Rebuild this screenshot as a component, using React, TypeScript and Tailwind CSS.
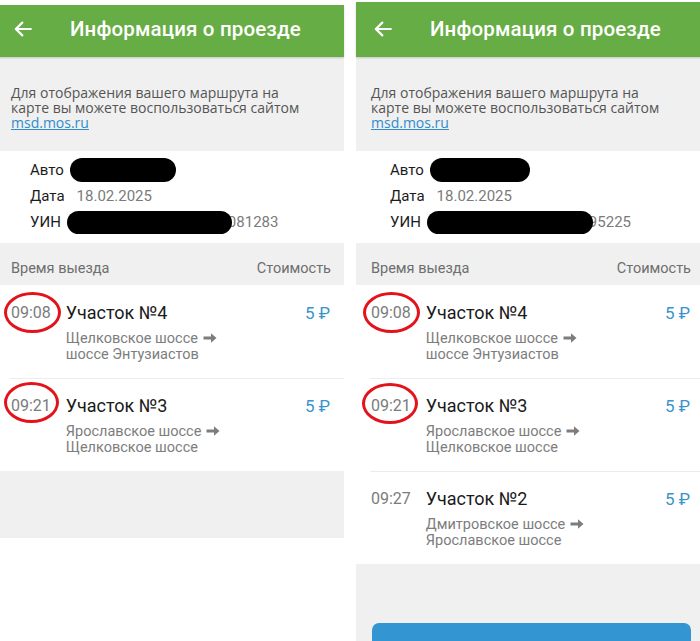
import React from "react";

type Item = {
  time: string;
  title: string;
  from: string;
  to: string;
  circle?: { left: number; top: number; w: number; h: number };
};

const leftItems: Item[] = [
  { time: "09:08", title: "Участок №4", from: "Щелковское шоссе", to: "шоссе Энтузиастов", circle: { left: 8, top: 7, w: 57, h: 41 } },
  { time: "09:21", title: "Участок №3", from: "Ярославское шоссе", to: "Щелковское шоссе", circle: { left: 8, top: 4, w: 55, h: 41 } },
];

const rightItems: Item[] = [
  { time: "09:08", title: "Участок №4", from: "Щелковское шоссе", to: "шоссе Энтузиастов", circle: { left: 7, top: 7, w: 57, h: 41 } },
  { time: "09:21", title: "Участок №3", from: "Ярославское шоссе", to: "Щелковское шоссе", circle: { left: 6, top: 5, w: 56, h: 41 } },
  { time: "09:27", title: "Участок №2", from: "Дмитровское шоссе", to: "Ярославское шоссе" },
];

const BackArrow = () => (
  <svg width="18" height="16" viewBox="0 0 18 16" fill="none" stroke="white" strokeWidth="2.2" strokeLinecap="round" strokeLinejoin="round">
    <path d="M16.8 8H2" />
    <path d="M8.3 1.6L1.8 8l6.5 6.4" />
  </svg>
);

const ThickArrow = () => (
  <svg width="14" height="12" viewBox="0 0 14 12" className="ml-[5px] inline-block align-[-1px]" fill="#7d7d7d">
    <path d="M0.5 4.6H8V1.2L13.5 6 8 10.8V7.4H0.5z" />
  </svg>
);

const Row = ({ item, first }: { item: Item; first: boolean }) => (
  <div className="relative h-[93px]">
    {!first && <div className="ml-[14px] h-px bg-[#ececec]" />}
    <div className={`flex items-start gap-[15px] pl-[15px] pr-[14px] ${first ? "pt-[16px]" : "pt-[15px]"}`}>
      <div className="text-[16px] leading-[24px] text-[#7b7b7b]">{item.time}</div>
      <div className="flex-1">
        <div className="flex items-start justify-between">
          <div className="text-[18px] leading-[24px] text-[#1a1a1a]">{item.title}</div>
          <div className="text-[17px] leading-[24px] text-[#3a93cc]">5 ₽</div>
        </div>
        <div className="mt-[6px] text-[14.5px] leading-[15.5px] text-[#7d7d7d]">
          <div>
            {item.from}
            <ThickArrow />
          </div>
          <div>{item.to}</div>
        </div>
      </div>
    </div>
    {item.circle && (
      <div
        className="pointer-events-none absolute rounded-[50%] border-[3px] border-[#e3121b]"
        style={{ left: item.circle.left, top: item.circle.top, width: item.circle.w, height: item.circle.h }}
      />
    )}
  </div>
);

const Panel = ({
  items,
  topGap,
  headerH,
  uinTail,
  autoBlob,
  uinBlob,
  right,
}: {
  items: Item[];
  topGap: string;
  headerH: string;
  uinTail: string;
  autoBlob: string;
  uinBlob: string;
  right: boolean;
}) => (
  <div className="relative w-[348px] shrink-0 font-['Roboto',sans-serif]">
    <div className={topGap} />
    <div className={`relative z-10 flex items-center bg-[#67ad45] shadow-[0_1px_2px_rgba(0,0,0,0.18)] ${headerH}`}>
      <div className="ml-[18px] flex w-[56px] items-center">
        <BackArrow />
      </div>
      <div className="text-[20.5px] font-medium tracking-[0.15px] text-white">Информация о проезде</div>
    </div>
    <div className="h-[94px] bg-[#f0f0f0] pl-[15px] pt-[28px] font-['Open_Sans',sans-serif] text-[14px] leading-[15px] text-[#555555]">
      <div>Для отображения вашего маршрута на</div>
      <div>карте вы можете воспользоваться сайтом</div>
      <div className="text-[#2f8ccb] underline">msd.mos.ru</div>
    </div>
    <div className="h-[92px] bg-white pl-[34px] pt-[6px] text-[15px]">
      <div className="flex h-[26px] items-center">
        <span className="text-[#1c1c1c]">Авто</span>
        <span className={`ml-[6px] inline-block h-[24px] rounded-full bg-black ${autoBlob}`} />
      </div>
      <div className="flex h-[26px] items-center">
        <span className="text-[#1c1c1c]">Дата</span>
        <span className="ml-[12px] text-[#7b7b7b]">18.02.2025</span>
      </div>
      <div className="flex h-[26px] items-center">
        <span className="text-[#1c1c1c]">УИН</span>
        <span className={`relative z-10 ml-[6px] inline-block h-[23px] rounded-full bg-black ${uinBlob}`} />
        <span className="-ml-[4px] text-[#7b7b7b]">{uinTail}</span>
      </div>
    </div>
    <div className="flex h-[42px] justify-between bg-[#f0f0f0] pl-[15px] pr-[13px] pt-[17px] text-[14.5px] leading-[18px] text-[#6e6e6e]">
      <span>Время выезда</span>
      <span>Стоимость</span>
    </div>
    <div className="bg-white">
      {items.map((it, i) => (
        <Row key={i} item={it} first={i === 0} />
      ))}
    </div>
    {right ? (
      <div className="h-[100px] bg-[#f0f0f0] pt-[59px]">
        <div className="ml-[16px] mr-[13px] h-[50px] rounded-[7px] bg-[#3396d2]" />
      </div>
    ) : (
      <div className="h-[67px] bg-[#f0f0f0]" />
    )}
  </div>
);

export default function App() {
  return (
    <div className="flex h-[641px] w-[700px] gap-[12px] overflow-hidden bg-white">
      <div className="-ml-[4px] flex">
        <Panel
          items={leftItems}
          topGap="h-[5px]"
          headerH="h-[52px] pb-[4px]"
          uinTail="081283"
          autoBlob="w-[106px]"
          uinBlob="w-[165px]"
          right={false}
        />
      </div>
      <Panel
        items={rightItems}
        topGap="h-[2px]"
        headerH="h-[55px] pb-[1px]"
        uinTail="95225"
        autoBlob="w-[100px]"
        uinBlob="w-[166px]"
        right={true}
      />
    </div>
  );
}
